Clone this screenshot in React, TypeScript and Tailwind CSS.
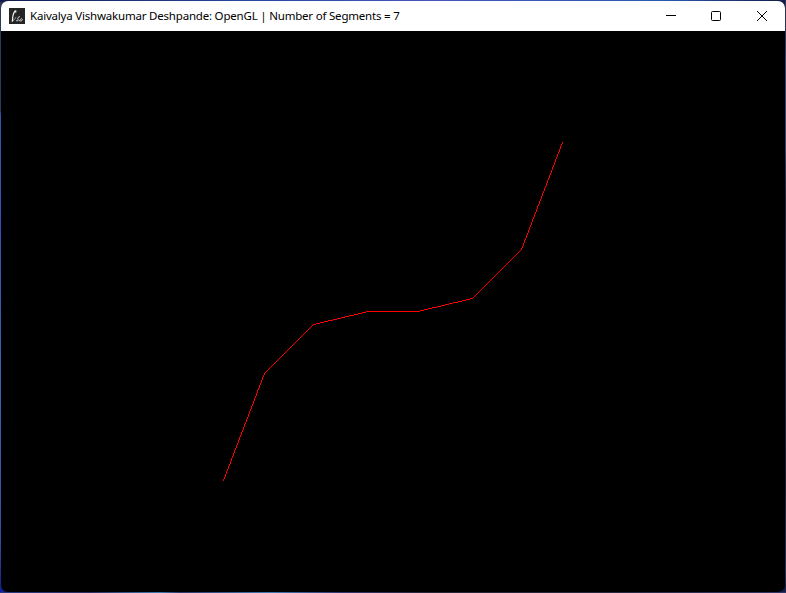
import React from "react";

type Point = [number, number];

const curve: Point[] = [
  [223, 480],
  [264, 373],
  [313, 324],
  [368, 311],
  [417, 311],
  [472, 298],
  [521, 249],
  [562, 142],
];

// Rasterises the polyline without antialiasing, one pixel per major-axis step.
function rasterise(points: Point[]): string {
  let d = "";
  for (let i = 0; i < points.length - 1; i++) {
    const [x0, y0] = points[i];
    const [x1, y1] = points[i + 1];
    const steps = Math.max(Math.abs(x1 - x0), Math.abs(y1 - y0));
    for (let s = 0; s <= steps; s++) {
      const x = Math.round(x0 + ((x1 - x0) * s) / steps);
      const y = Math.round(y0 + ((y1 - y0) * s) / steps);
      d += `M${x - 1} ${y - 31}h1v1h-1z`;
    }
  }
  return d;
}

function AppIcon() {
  return (
    <svg className="h-4 w-4 shrink-0 bg-[#252525]" viewBox="0 0 16 16" fill="none" stroke="#f0f0f0" strokeLinecap="round">
      <path d="M3.500 13C3.500 9 4.300 5.500 5.700 3.500C6.500 2.500 7.200 2.700 6.700 4" strokeWidth="1.3" />
      <path d="M2.800 13.200C4.500 13 6 11.500 6.800 9.300" strokeWidth="0.8" opacity="0.6" />
      <path d="M7.500 12.800C8.800 13.200 9.700 12.500 9 11.200C8.300 9.800 9.500 8.800 10.500 8.600M10.300 12.700C11.800 13.300 13.500 12.700 13.300 11.500C13 10.300 11.800 10.500 11.500 11.300" strokeWidth="1" opacity="0.85" />
    </svg>
  );
}

export default function App() {
  return (
    <div className="h-[593px] w-[786px] bg-[linear-gradient(to_right,#101c4e,#24469b_30%,#4359bd_55%,#2857ae_85%,#141c48)]">
      <div className="h-full w-full bg-[linear-gradient(to_bottom,transparent_2px,#303a5b_2px,#283b58_110px,#3154b5_115px,#334fb6_230px,#3b63b5_380px,#354ca5_540px,#101f91)] bg-[length:393px_593px] bg-no-repeat">
        <div className="h-full w-full bg-[linear-gradient(to_bottom,#2d3154_30px,#304477_60px,#304070_150px,#20213d_200px,#252f52_330px,#1c1c32_480px,#27335e_570px,#191b42)] bg-[length:1px_593px] bg-right bg-no-repeat">
          <div className="h-full w-full bg-[linear-gradient(to_right,#263a82,#292e61_90px,#3b78ad_160px,#2c376a_180px,#3e78b0_270px,#30366f_340px,#242435_430px,#24263b_600px,#303667)] bg-[length:786px_1px] bg-bottom bg-no-repeat p-px">
            <main className="flex h-full w-full flex-col overflow-hidden rounded-[7px] bg-black font-['Noto_Sans',sans-serif]">
              <header className="flex h-[30px] shrink-0 items-center bg-white pl-2 text-black">
                <AppIcon />
                <h1 className="ml-[5px] flex-1 whitespace-nowrap text-[11.5px] leading-4 tracking-[-0.2px]">
                  Kaivalya Vishwakumar Deshpande: OpenGL | Number of Segments = 7
                </h1>
                <button aria-label="Minimize" className="flex h-full w-[45px] items-center justify-center">
                  <svg className="h-[10px] w-[10px]" viewBox="0 0 10 10" shapeRendering="crispEdges"><path d="M0 4h10v1H0z" /></svg>
                </button>
                <button aria-label="Maximize" className="flex h-full w-[46px] items-center justify-center">
                  <svg className="h-[10px] w-[10px]" viewBox="0 0 10 10" fill="none" stroke="#000"><rect x=".5" y=".5" width="9" height="9" rx="1" /></svg>
                </button>
                <button aria-label="Close" className="flex h-full w-[46px] items-center justify-center">
                  <svg className="h-[10px] w-[10px]" viewBox="0 0 10 10" stroke="#000"><path d="M0 0L10 10M10 0L0 10" /></svg>
                </button>
              </header>
              <svg className="h-[561px] w-[784px]" viewBox="0 0 784 561" fill="#ff0000" shapeRendering="crispEdges">
                <path d={rasterise(curve)} />
              </svg>
            </main>
          </div>
        </div>
      </div>
    </div>
  );
}
